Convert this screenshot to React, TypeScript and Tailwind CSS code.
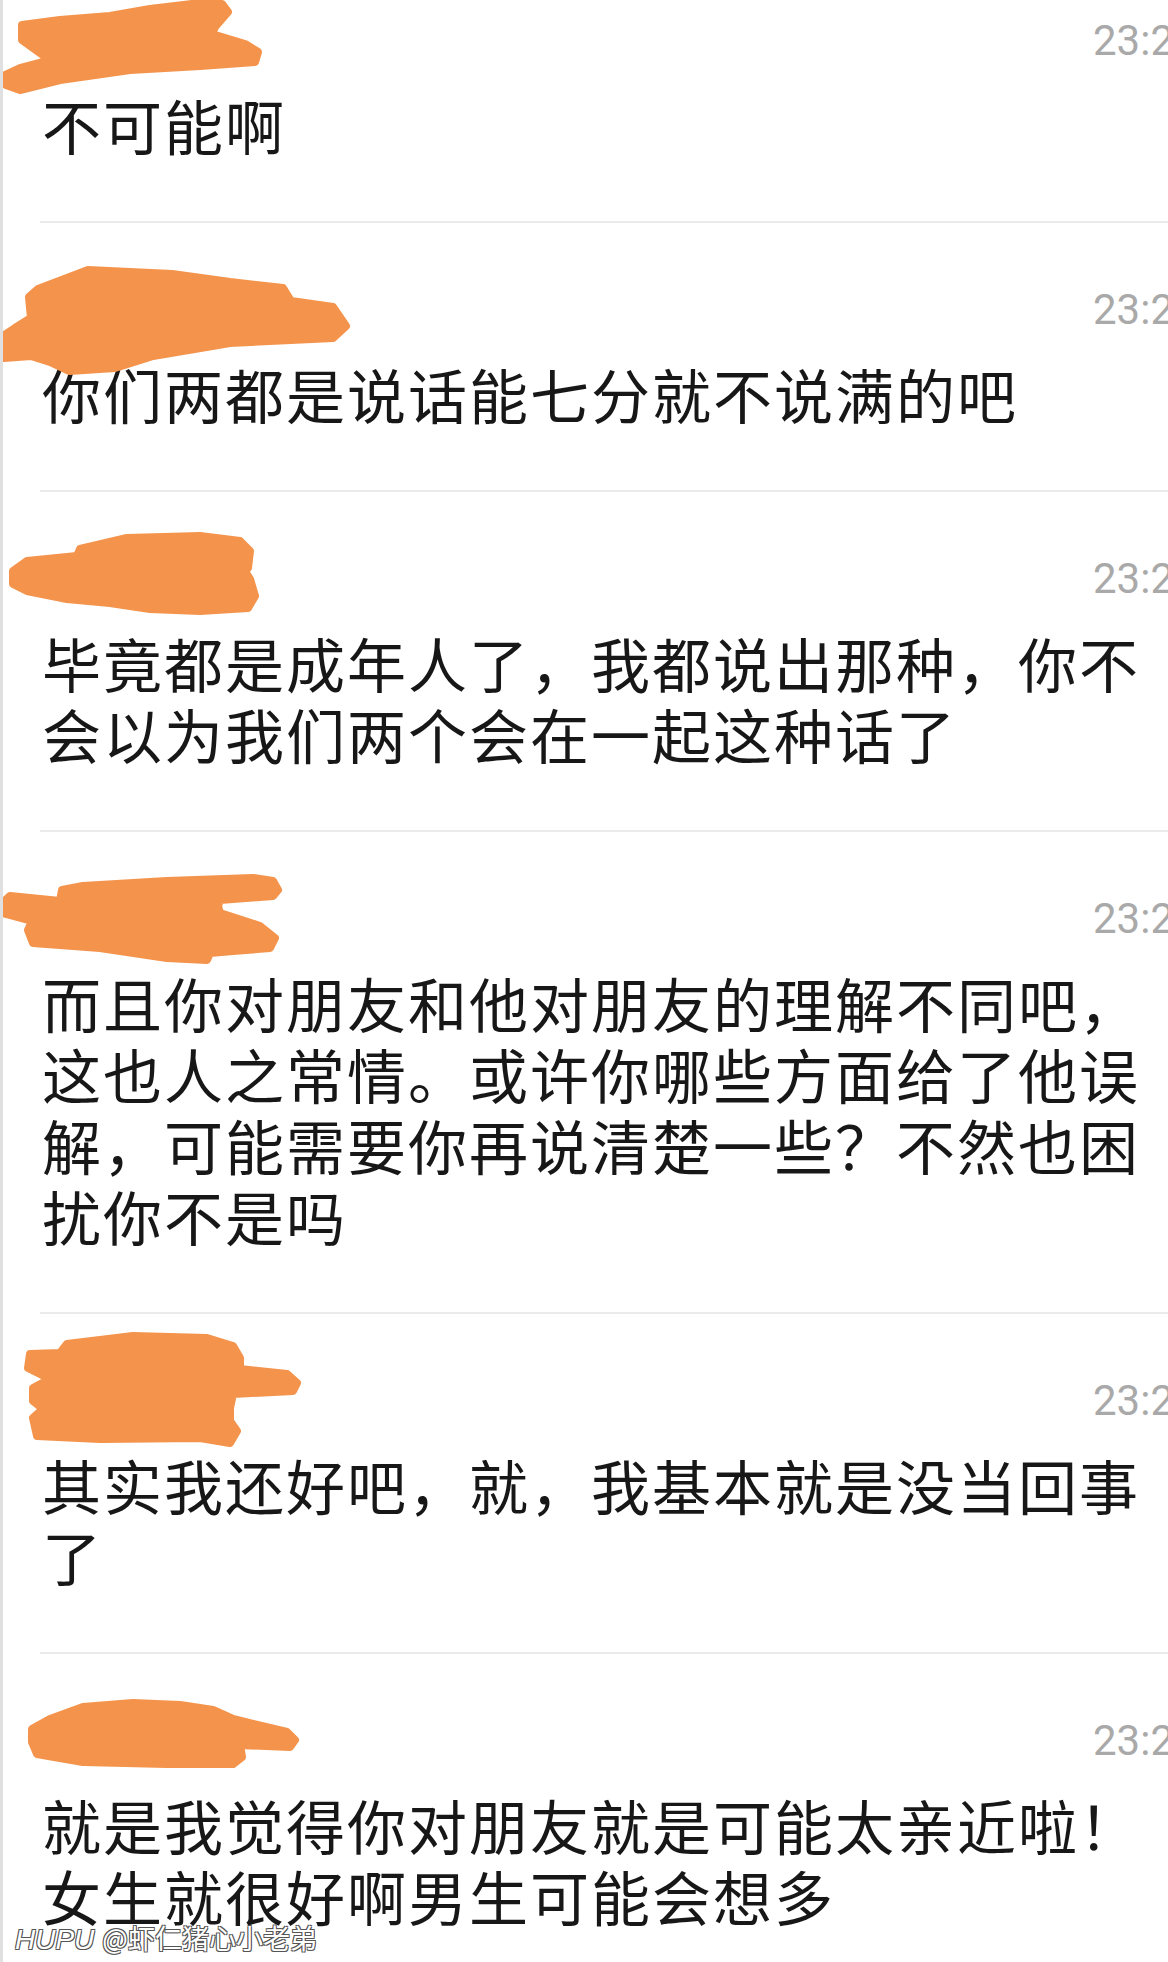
const ORANGE = "#F4934B";

type Msg = {
  text: string;
  top: number; // where the item's divider sits in the screenshot, used as the blob's origin
  blob: string; // polygon points in page coords
};

const messages: Msg[] = [
  {
    text: "不可能啊",
    top: -46,
    blob:
      "22,25 60,20 110,16 150,9 200,3 222,4 228,12 215,27 212,34 245,44 258,52 255,62 200,66 130,70 60,80 20,90 6,85 5,75 20,68 50,60 40,53 22,40",
  },
  {
    text: "你们两都是说话能七分就不说满的吧",
    top: 223,
    blob:
      "38,289 88,270 172,274 230,282 283,288 291,301 333,307 346,326 333,338 230,343 153,356 115,368 69,371 50,362 31,356 4,358 0,338 15,328 31,318 29,297",
  },
  {
    text: "毕竟都是成年人了，我都说出那种，你不会以为我们两个会在一起这种话了",
    top: 491,
    blob:
      "13,570 27,560 77,555 80,548 127,537 200,535 240,540 250,550 248,567 245,570 250,578 255,595 248,607 200,610 150,608 110,602 67,598 27,590 13,583",
  },
  {
    text: "而且你对朋友和他对朋友的理解不同吧，这也人之常情。或许你哪些方面给了他误解，可能需要你再说清楚一些？不然也困扰你不是吗",
    top: 829,
    blob:
      "0,902 10,893 60,898 62,887 83,883 167,878 253,875 273,878 278,887 273,893 220,897 218,903 220,910 260,923 275,935 270,945 233,948 210,950 207,957 167,955 100,945 33,940 28,927 32,918 3,910",
  },
  {
    text: "其实我还好吧，就，我基本就是没当回事了",
    top: 1313,
    blob:
      "30,1353 60,1352 67,1343 133,1335 207,1337 233,1345 240,1357 240,1368 287,1373 297,1382 293,1390 233,1393 230,1407 230,1420 237,1430 230,1442 200,1437 100,1438 37,1435 33,1417 43,1408 33,1400 33,1387 50,1378 28,1367",
  },
  {
    text: "就是我觉得你对朋友就是可能太亲近啦！女生就很好啊男生可能会想多",
    top: 1652,
    blob:
      "32,1727 50,1717 83,1705 133,1701 180,1703 213,1708 233,1717 287,1730 295,1738 290,1745 240,1743 242,1755 233,1762 167,1762 83,1760 37,1752 32,1740",
  },
];

function Blob({ top, points }: { top: number; points: string }) {
  return (
    <svg
      className="absolute left-0 top-0 pointer-events-none"
      width={360}
      height={240}
      viewBox={`0 ${top} 360 240`}
    >
      <polygon points={points} fill={ORANGE} stroke={ORANGE} strokeWidth={8} strokeLinejoin="round" />
    </svg>
  );
}

function MessageItem({ msg }: { msg: Msg }) {
  return (
    <div className="relative">
      <div className="ml-[40px] border-b-2 border-[#ebebeb] pb-[61px]">
        <div className="flex h-[135px] items-start">
          <span className="ml-auto mt-[62px] w-[75px] whitespace-nowrap text-[42px] leading-[50px] text-[#a9a9a9] font-['Roboto',sans-serif]">
            23:20
          </span>
        </div>
        <p className="pl-[2px] pr-[8px] text-[59px] leading-[71px] tracking-[2px] text-[#171717] font-['Noto_Sans_CJK_SC',sans-serif]">
          {msg.text}
        </p>
      </div>
      <Blob top={msg.top} points={msg.blob} />
    </div>
  );
}

export default function App() {
  return (
    <div className="relative h-[1962px] w-[1168px] overflow-hidden bg-white border-l-[3px] border-[#e0e0e0]">
      <div className="-mt-[46px] -ml-[3px]">
        {messages.map((m, i) => (
          <MessageItem key={i} msg={m} />
        ))}
      </div>

      {/* watermark */}
      <div className="absolute left-[12px] bottom-[6px] flex items-baseline gap-[8px] text-white [text-shadow:1px_1px_0_#555,-1px_-1px_0_#555,1px_-1px_0_#555,-1px_1px_0_#555]">
        <span className="text-[28px] italic leading-[32px] font-['Liberation_Sans',sans-serif]">HUPU</span>
        <span className="text-[27px] leading-[32px] font-['Noto_Sans_CJK_SC',sans-serif]">@虾仁猪心小老弟</span>
      </div>
    </div>
  );
}
